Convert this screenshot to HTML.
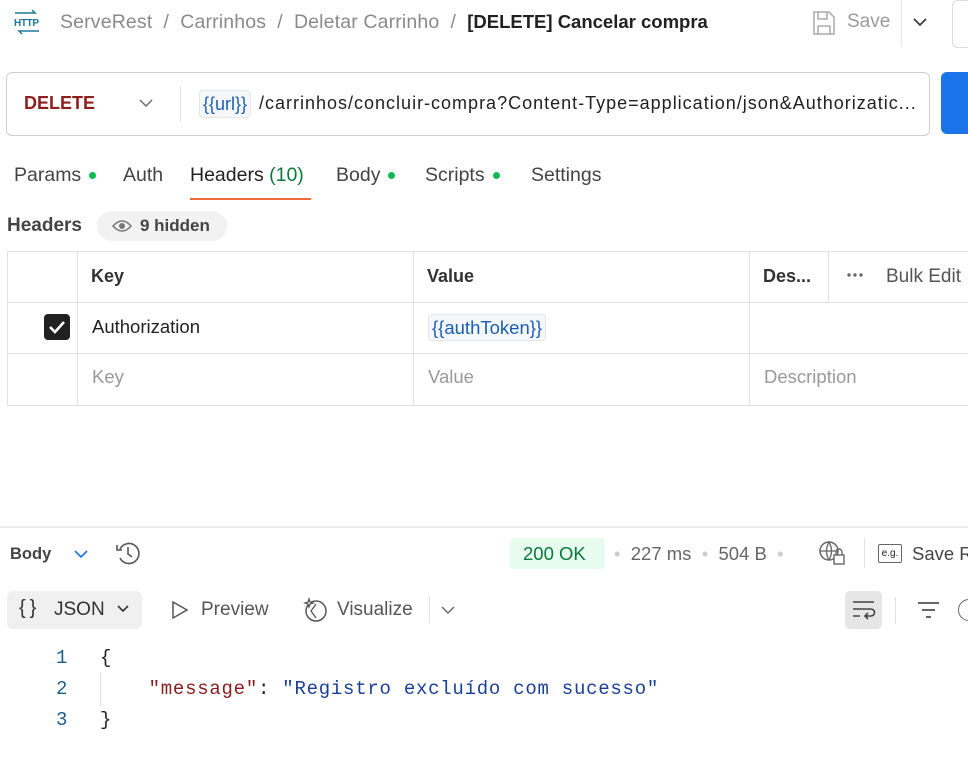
<!DOCTYPE html><html><head><style>
body{margin:0;width:968px;height:772px;overflow:hidden;background:#fff;font-family:"Liberation Sans",sans-serif;color:#212121;position:relative}
.a{position:absolute;white-space:nowrap}
.dot{display:inline-block;width:7px;height:7px;border-radius:50%;background:#0cbb52;margin-left:8px;vertical-align:2px}
.mono{font-family:"Liberation Mono",monospace}
</style></head><body>
<svg class="a" style="left:13px;top:9px" width="28" height="26"><path d="M2 4h20l-3-3M26 22H6l3 3" stroke="#1b7a9c" stroke-width="1.5" fill="none"/><text x="1" y="17" font-size="10" font-weight="bold" fill="#1b7a9c" font-family="Liberation Sans" textLength="25">HTTP</text></svg>
<div class="a" style="left:60px;top:11px;font-size:19.5px;color:#8a8a8a;letter-spacing:.15px">ServeRest &nbsp;/&nbsp; Carrinhos &nbsp;/&nbsp; Deletar Carrinho &nbsp;/ &nbsp;<span style="color:#212121;font-weight:bold;font-size:18.5px;letter-spacing:0">[DELETE] Cancelar compra</span></div>
<svg class="a" style="left:812px;top:10px" width="24" height="26"><path d="M2 2h15l5 5v17H2z M6 2v7h9V2 M6 24v-8h12v8" stroke="#aaa" stroke-width="1.5" fill="none"/></svg>
<div class="a" style="left:847px;top:11px;font-size:19px;color:#9a9a9a">Save</div>
<div class="a" style="left:901px;top:0;width:1px;height:46px;background:#e5e5e5"></div>
<svg class="a" style="left:912px;top:16px" width="16" height="12"><path d="M2 3l6 6 6-6" stroke="#333" stroke-width="1.6" fill="none"/></svg>
<div class="a" style="left:952px;top:0;width:20px;height:46px;border:1px solid #ddd;border-radius:6px"></div>
<div class="a" style="left:6px;top:72px;width:922px;height:62px;border:1px solid #cfcfcf;border-radius:6px"></div>
<div class="a" style="left:24px;top:93px;font-size:18px;color:#8f1f1f;font-weight:bold">DELETE</div>
<svg class="a" style="left:138px;top:97px" width="16" height="12"><path d="M2 3l6 6 6-6" stroke="#666" stroke-width="1.4" fill="none"/></svg>
<div class="a" style="left:180px;top:86px;width:1px;height:36px;background:#e0e0e0"></div>
<div class="a" style="left:199px;top:90px;height:26px;padding:0 3px;border:1px solid #e5e5e5;border-radius:4px;background:#f5f7fb;color:#1a5fb4;font-size:18px;line-height:26px">{{url}}</div>
<div class="a" style="left:259px;top:93px;font-size:18px;color:#212121;letter-spacing:1px">/carrinhos/concluir-compra?Content-Type=application/json&amp;Authorizatic...</div>
<div class="a" style="left:941px;top:72px;width:40px;height:62px;background:#1a73e8;border-radius:6px"></div>
<div class="a" style="left:14px;top:164px;font-size:19.5px;color:#444">Params<span class="dot"></span></div>
<div class="a" style="left:123px;top:164px;font-size:19.5px;color:#444">Auth</div>
<div class="a" style="left:190px;top:164px;font-size:19.5px;color:#212121">Headers <span style="color:#0a7a3a">(10)</span></div>
<div class="a" style="left:190px;top:198px;width:121px;height:2px;background:#f26b3a"></div>
<div class="a" style="left:336px;top:164px;font-size:19.5px;color:#444">Body<span class="dot"></span></div>
<div class="a" style="left:425px;top:164px;font-size:19.5px;color:#444">Scripts<span class="dot"></span></div>
<div class="a" style="left:531px;top:164px;font-size:19.5px;color:#444">Settings</div>
<div class="a" style="left:7px;top:215px;font-size:19px;color:#444;font-weight:bold">Headers</div>
<div class="a" style="left:97px;top:211px;width:130px;height:30px;background:#f2f2f2;border-radius:15px"></div>
<svg class="a" style="left:111px;top:219px" width="22" height="14"><path d="M2 7q9-10 18 0q-9 10-18 0z" stroke="#777" stroke-width="1.5" fill="none"/><circle cx="11" cy="7" r="3" fill="#777"/></svg>
<div class="a" style="left:140px;top:216px;font-size:17px;color:#444;font-weight:bold">9 hidden</div>
<div class="a" style="left:7px;top:251px;width:970px;height:153px;border:1px solid #e0e0e0;border-right:none"></div>
<div class="a" style="left:7px;top:302px;width:970px;height:1px;background:#e0e0e0"></div>
<div class="a" style="left:7px;top:353px;width:970px;height:1px;background:#e0e0e0"></div>
<div class="a" style="left:77px;top:251px;width:1px;height:154px;background:#e0e0e0"></div>
<div class="a" style="left:413px;top:251px;width:1px;height:154px;background:#e0e0e0"></div>
<div class="a" style="left:749px;top:251px;width:1px;height:154px;background:#e0e0e0"></div>
<div class="a" style="left:828px;top:251px;width:1px;height:51px;background:#e0e0e0"></div>
<div class="a" style="left:91px;top:266px;font-size:18px;font-weight:bold;color:#333">Key</div>
<div class="a" style="left:427px;top:266px;font-size:18px;font-weight:bold;color:#333">Value</div>
<div class="a" style="left:763px;top:266px;font-size:18px;font-weight:bold;color:#333">Des...</div>
<svg class="a" style="left:846px;top:272px" width="18" height="6"><circle cx="3" cy="3" r="1.7" fill="#666"/><circle cx="9" cy="3" r="1.7" fill="#666"/><circle cx="15" cy="3" r="1.7" fill="#666"/></svg>
<div class="a" style="left:886px;top:266px;font-size:19px;color:#555">Bulk Edit</div>
<div class="a" style="left:44px;top:314px;width:26px;height:26px;background:#212121;border-radius:4px"></div>
<svg class="a" style="left:44px;top:314px" width="26" height="26"><path d="M6 13l5 5 9-10" stroke="#fff" stroke-width="2.6" fill="none"/></svg>
<div class="a" style="left:92px;top:316px;font-size:18.5px">Authorization</div>
<div class="a" style="left:428px;top:314px;height:25px;padding:0 3px;border:1px solid #e5e5e5;border-radius:4px;background:#f5f7fb;color:#1a5fb4;font-size:18.5px;line-height:25px">{{authToken}}</div>
<div class="a" style="left:92px;top:366px;font-size:18.5px;color:#999">Key</div>
<div class="a" style="left:428px;top:366px;font-size:18.5px;color:#999">Value</div>
<div class="a" style="left:764px;top:366px;font-size:18.5px;color:#999">Description</div>
<div class="a" style="left:0;top:526px;width:968px;height:2px;background:#ececec"></div>
<div class="a" style="left:10px;top:545px;font-size:16.5px;font-weight:bold;color:#444">Body</div>
<svg class="a" style="left:73px;top:548px" width="16" height="12"><path d="M2 3l6 6 6-6" stroke="#1a73e8" stroke-width="1.6" fill="none"/></svg>
<svg class="a" style="left:114px;top:540px" width="28" height="26"><path d="M6 9A10 10 0 1 1 6 18M3 5v5h5M14 7v7l4 3" stroke="#555" stroke-width="1.6" fill="none"/></svg>
<div class="a" style="left:510px;top:538px;width:95px;height:31px;background:#e7fbee;border-radius:4px"></div>
<div class="a" style="left:523px;top:543px;font-size:18.5px;color:#0a7a3a">200 OK</div>
<div class="a" style="left:614px;top:543px;font-size:18.5px;color:#666"><span style="color:#ccc">&bull;</span> &nbsp;227 ms &nbsp;<span style="color:#ccc">&bull;</span> &nbsp;504 B &nbsp;<span style="color:#ccc">&bull;</span></div>
<svg class="a" style="left:818px;top:540px" width="28" height="26"><circle cx="11" cy="11" r="9" stroke="#666" stroke-width="1.5" fill="none"/><path d="M2 11h18M11 2q-5 9 0 18M11 2q5 9 0 18" stroke="#666" stroke-width="1.3" fill="none"/><rect x="16" y="15" width="10" height="9" fill="#fff" stroke="#666" stroke-width="1.4"/><path d="M18 15v-3a3 3 0 0 1 6 0v3" stroke="#666" stroke-width="1.4" fill="none"/></svg>
<div class="a" style="left:864px;top:538px;width:1px;height:30px;background:#e0e0e0"></div>
<div class="a" style="left:878px;top:544px;width:22px;height:17px;border:1.5px solid #666;border-radius:2px;font-size:10px;text-align:center;line-height:17px">e.g.</div>
<div class="a" style="left:912px;top:543px;font-size:18.5px;color:#444">Save R</div>
<div class="a" style="left:7px;top:591px;width:135px;height:38px;background:#f0f0f0;border-radius:6px"></div>
<div class="a" style="left:19px;top:597px;font-size:20px;color:#333">{&thinsp;}</div>
<div class="a" style="left:54px;top:599px;font-size:19px;color:#333">JSON</div>
<svg class="a" style="left:116px;top:604px" width="14" height="10"><path d="M2 2l5 5 5-5" stroke="#333" stroke-width="1.6" fill="none"/></svg>
<svg class="a" style="left:170px;top:600px" width="20" height="20"><path d="M3 2l14 8-14 8z" stroke="#555" stroke-width="1.5" fill="none"/></svg>
<div class="a" style="left:201px;top:599px;font-size:19px;color:#555">Preview</div>
<svg class="a" style="left:302px;top:596px" width="28" height="28"><circle cx="14" cy="15" r="10" stroke="#555" stroke-width="1.5" fill="none"/><path d="M14 8l-5 7 5 7M7 3l1 3 3 1-3 1-1 3-1-3-3-1 3-1z" stroke="#555" stroke-width="1.3" fill="#fff"/></svg>
<div class="a" style="left:337px;top:599px;font-size:19px;color:#555">Visualize</div>
<div class="a" style="left:429px;top:597px;width:1px;height:26px;background:#e0e0e0"></div>
<svg class="a" style="left:440px;top:604px" width="16" height="12"><path d="M2 3l6 6 6-6" stroke="#666" stroke-width="1.4" fill="none"/></svg>
<div class="a" style="left:845px;top:591px;width:37px;height:38px;background:#e6e6e6;border-radius:5px"></div>
<svg class="a" style="left:851px;top:600px" width="26" height="22"><path d="M2 2h21M2 9h18a3.5 3.5 0 0 1 0 7h-6M17 13l-3 3 3 3M2 16h7" stroke="#444" stroke-width="1.6" fill="none"/></svg>
<div class="a" style="left:895px;top:597px;width:1px;height:26px;background:#e0e0e0"></div>
<div class="a" style="left:918px;top:602px;width:21px;height:2px;background:#666"></div>
<div class="a" style="left:922px;top:609px;width:13px;height:2px;background:#666"></div>
<div class="a" style="left:926px;top:616px;width:5px;height:2px;background:#666"></div>
<div class="a" style="left:958px;top:599px;width:20px;height:20px;border:1.5px solid #666;border-radius:50%"></div>
<div class="a mono" style="left:56px;top:643px;font-size:19px;line-height:31px;color:#1a5f8a">1<br>2<br>3</div>
<div class="a" style="left:100px;top:672px;width:1px;height:34px;background:#ddd"></div>
<div class="a mono" style="left:100px;top:643px;font-size:19px;line-height:31px;color:#212121;letter-spacing:.75px">{<br>&nbsp;&nbsp;&nbsp;&nbsp;<span style="color:#8a1c1c">"message"</span>: <span style="color:#1a3f9a">"Registro excluído com sucesso"</span><br>}</div>
</body></html>
